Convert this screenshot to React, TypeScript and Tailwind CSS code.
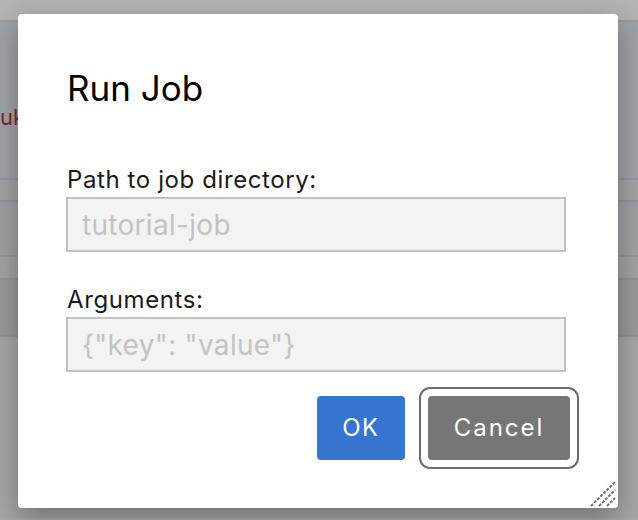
import React from "react";

export default function App() {
  const font = { fontFamily: "Inter, 'Noto Sans', sans-serif" };
  return (
    <div className="relative w-[638px] h-[520px] overflow-hidden bg-[#a9a9a9]" style={font}>
      {/* underlying page (dimmed) */}
      <div className="flex flex-col">
        <div className="h-[20px] bg-[#b3b3b3]" />
        <div className="h-[158px] border-t-2 border-[#999a9c] bg-[#9fa2a7] flex items-center">
          <span className="ml-0 mt-[34px] text-[22px] leading-[24px] text-[#8a2222]">uk</span>
        </div>
        <div className="h-[22px] border-t-2 border-[#969696] bg-[#a3a3a3]" />
        <div className="h-[55px] border-t-2 border-[#969696] bg-[#9ea0a4]" />
        <div className="h-[23px] border-t-2 border-[#969696] bg-[#a2a2a2]" />
        <div className="h-[57px] border-t-2 border-[#949494] bg-[#9a9a9a]" />
        <div className="h-[183px] border-t-2 border-[#959595] bg-[#a6a6a6]" />
      </div>

      {/* overlay + dialog */}
      <div className="absolute inset-0 pl-[18px] pt-[14px]">
        <div className="relative w-[600px] h-[494px] bg-white rounded-[4px] shadow-[0_10px_28px_rgba(0,0,0,0.32)] pl-[48px] pr-[52px] pt-[52px]">
          <h1 className="text-[35px] leading-[44px] text-black ml-[1px]">Run Job</h1>

          <div className="mt-[57px] text-[24px] leading-[26px] tracking-[0.6px] text-[#1a1a1a] ml-[1px]">Path to job directory:</div>
          <div className="mt-[4px] w-[500px] h-[55px] border-2 border-[#c2c2c2] bg-[#f3f3f3] flex items-center pl-[14px]">
            <span className="text-[28px] tracking-[0.3px] text-[#c3c3c3]">tutorial-job</span>
          </div>

          <div className="mt-[35px] text-[24px] leading-[26px] tracking-[0.6px] text-[#1a1a1a] ml-[1px]">Arguments:</div>
          <div className="mt-[4px] w-[500px] h-[55px] border-2 border-[#c2c2c2] bg-[#f3f3f3] flex items-center pl-[14px]">
            <span className="text-[28px] tracking-[0.3px] text-[#c3c3c3]">{'{"key": "value"}'}</span>
          </div>

          <div className="mt-[15px] flex justify-end items-center gap-[14px] mr-[-13px]">
            <button className="w-[88px] h-[64px] rounded-[4px] bg-[#3575d0] text-white text-[24px] tracking-[1.5px]">
              OK
            </button>
            <div className="rounded-[11px] border-2 border-[#6b6b6b] p-[7px]">
              <button className="w-[142px] h-[64px] rounded-[4px] bg-[#767676] text-white text-[24px] tracking-[2px] block">
                Cancel
              </button>
            </div>
          </div>

          <svg className="absolute right-[2px] bottom-[1px]" width="26" height="26" viewBox="0 0 26 26">
            <g stroke="#6e6e6e" strokeWidth="2" strokeDasharray="3 1.4">
              <line x1="1" y1="25" x2="25" y2="1" />
              <line x1="9" y1="25" x2="25" y2="9" />
              <line x1="17" y1="25" x2="25" y2="17" />
            </g>
          </svg>
        </div>
      </div>
    </div>
  );
}
